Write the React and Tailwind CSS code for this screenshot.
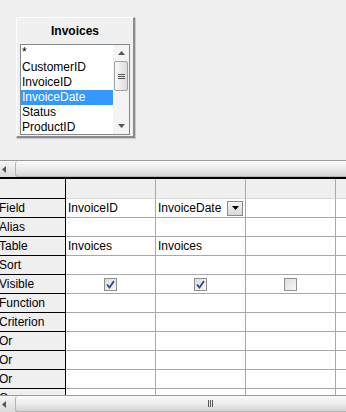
const font = { fontFamily: '"Liberation Sans", Arial, sans-serif' };

const fields = ["*", "CustomerID", "InvoiceID", "InvoiceDate", "Status", "ProductID"];
const rows = ["Field", "Alias", "Table", "Sort", "Visible", "Function", "Criterion", "Or", "Or", "Or"];

function ArrowLeft() {
  return (
    <svg width="5" height="7" viewBox="0 0 5 7">
      <path d="M4 0 L0 3.5 L4 7 Z" fill="#555" />
    </svg>
  );
}

function Grip({ vertical }) {
  return (
    <div className={vertical ? "flex flex-col gap-[1px]" : "flex gap-[1px]"}>
      <div className={vertical ? "h-[1px] w-[7px] bg-[#555]" : "w-[1px] h-[7px] bg-[#555]"} />
      <div className={vertical ? "h-[1px] w-[7px] bg-[#555]" : "w-[1px] h-[7px] bg-[#555]"} />
      <div className={vertical ? "h-[1px] w-[7px] bg-[#555]" : "w-[1px] h-[7px] bg-[#555]"} />
    </div>
  );
}

function HScroll({ grip }) {
  return (
    <div className="h-[17px] shrink-0 flex border-t border-[#9a9a9a] bg-gradient-to-b from-[#f6f6f6] to-[#dadada]">
      <div className="w-[15px] flex items-center pl-[2px]">
        <ArrowLeft />
      </div>
      <div className="flex-1 flex items-center rounded-l-[3px] border-l border-b border-[#b5b5b5] bg-gradient-to-b from-[#fbfbfb] via-[#ececec] to-[#d4d4d4]">
        {grip && (
          <div className="pl-[192px]">
            <Grip />
          </div>
        )}
      </div>
    </div>
  );
}

function Check({ checked }) {
  return (
    <div className="w-[13px] h-[13px] border border-[#8e8f8f] bg-gradient-to-br from-[#dcdcdc] to-[#f8f8f8] flex items-center justify-center">
      {checked && (
        <svg width="9" height="9" viewBox="0 0 9 9">
          <path d="M1 4.5 L3.5 7.5 L8 1" stroke="#2b4a8a" strokeWidth="1.8" fill="none" />
        </svg>
      )}
    </div>
  );
}

function DropButton() {
  return (
    <div className="w-[16px] h-[15px] border border-[#8a8a8a] bg-gradient-to-b from-[#f4f4f4] to-[#d9d9d9] flex items-center justify-center">
      <svg width="7" height="4" viewBox="0 0 7 4">
        <path d="M0 0 L7 0 L3.5 4 Z" fill="#000" />
      </svg>
    </div>
  );
}

function Cell({ children, header, center }) {
  return (
    <div
      className={
        "w-[90px] shrink-0 border-r border-b border-[#a8a8a8] flex items-center px-[2px] text-[12px] text-black " +
        (header ? "bg-[#efefef] border-b-[#d8d8d8] " : "bg-white ") +
        (center ? "justify-center" : "")
      }
    >
      {children}
    </div>
  );
}

function Row({ label, height, cells, header }) {
  return (
    <div className={"flex shrink-0 " + height}>
      <div className="w-[66px] shrink-0 bg-[#efefef] border-r border-b border-black flex items-center overflow-hidden">
        <span className="-ml-[1px] text-[12px] text-black whitespace-nowrap">{label}</span>
      </div>
      {cells.map((c, i) => (
        <Cell key={i} header={header} center={c && c.center}>
          {c && c.content}
        </Cell>
      ))}
      <div className={"flex-1 border-b " + (header ? "bg-[#efefef] border-[#d8d8d8]" : "bg-white border-[#a8a8a8]")} />
    </div>
  );
}

function cellsFor(label) {
  if (label === "Field")
    return [
      { content: "InvoiceID" },
      {
        content: (
          <div className="flex-1 flex items-center justify-between">
            <span>InvoiceDate</span>
            <DropButton />
          </div>
        ),
      },
      null,
    ];
  if (label === "Table") return [{ content: "Invoices" }, { content: "Invoices" }, null];
  if (label === "Visible")
    return [
      { content: <Check checked />, center: true },
      { content: <Check checked />, center: true },
      { content: <Check />, center: true },
    ];
  return [null, null, null];
}

export default function App() {
  return (
    <div className="w-[346px] h-[412px] overflow-hidden bg-[#efefef] flex flex-col" style={font}>
      {/* design area */}
      <div className="h-[160px] shrink-0 pt-[17px] pl-[16px]">
        <div className="w-[119px] h-[121px] border-l border-t border-white border-r-[#8c8c8c] border-b-[#8c8c8c] border-r-2 border-b-2 shadow-[1px_1px_0_#c8c8c8] bg-[#f0f0f0] flex flex-col px-[3px]">
          <div className="h-[26px] shrink-0 flex items-center justify-center font-bold text-[12px] text-black">Invoices</div>
          <div className="h-[91px] border border-[#828790] bg-white flex">
            <div className="flex-1 flex flex-col">
              {fields.map((f) => (
                <div
                  key={f}
                  className={
                    "h-[15px] leading-[15px] pl-[1px] text-[12px] " +
                    (f === "InvoiceDate" ? "bg-[#3399ff] text-white" : "text-black")
                  }
                >
                  {f}
                </div>
              ))}
            </div>
            <div className="w-[16px] flex flex-col items-center bg-[#f4f4f4]">
              <div className="h-[16px] flex items-center justify-center">
                <svg width="7" height="4" viewBox="0 0 7 4">
                  <path d="M0 4 L7 4 L3.5 0 Z" fill="#555" />
                </svg>
              </div>
              <div className="w-[14px] h-[30px] rounded-[2px] border border-[#a0a0a0] bg-gradient-to-r from-[#f8f8f8] to-[#dcdcdc] flex items-center justify-center">
                <Grip vertical />
              </div>
              <div className="flex-1" />
              <div className="h-[16px] flex items-center justify-center">
                <svg width="7" height="4" viewBox="0 0 7 4">
                  <path d="M0 0 L7 0 L3.5 4 Z" fill="#555" />
                </svg>
              </div>
            </div>
          </div>
        </div>
      </div>

      <HScroll />
      <div className="h-[2px] shrink-0 bg-black" />

      {/* query grid */}
      <div className="flex-1 flex flex-col overflow-hidden">
        <Row label="" height="h-[20px]" cells={[null, null, null]} header />
        {rows.map((r, i) => (
          <Row key={i} label={r} height="h-[19px]" cells={cellsFor(r)} />
        ))}
        <Row label="Or" height="h-[19px]" cells={[null, null, null]} />
      </div>

      <HScroll grip />
    </div>
  );
}
